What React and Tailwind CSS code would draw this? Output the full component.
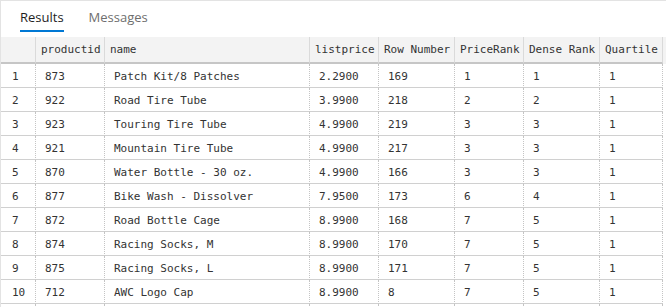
import React from 'react';

const columns = ['', 'productid', 'name', 'listprice', 'Row Number', 'PriceRank', 'Dense Rank', 'Quartile'];

const rows = [
  ['1', '873', 'Patch Kit/8 Patches', '2.2900', '169', '1', '1', '1'],
  ['2', '922', 'Road Tire Tube', '3.9900', '218', '2', '2', '1'],
  ['3', '923', 'Touring Tire Tube', '4.9900', '219', '3', '3', '1'],
  ['4', '921', 'Mountain Tire Tube', '4.9900', '217', '3', '3', '1'],
  ['5', '870', 'Water Bottle - 30 oz.', '4.9900', '166', '3', '3', '1'],
  ['6', '877', 'Bike Wash - Dissolver', '7.9500', '173', '6', '4', '1'],
  ['7', '872', 'Road Bottle Cage', '8.9900', '168', '7', '5', '1'],
  ['8', '874', 'Racing Socks, M', '8.9900', '170', '7', '5', '1'],
  ['9', '875', 'Racing Socks, L', '8.9900', '171', '7', '5', '1'],
  ['10', '712', 'AWC Logo Cap', '8.9900', '8', '7', '5', '1'],
];

const gridCols = 'grid grid-cols-[35px_69px_205px_69px_76px_69px_76px_63px]';

const App = () => {
  return (
    <div className="h-[307px] w-[666px] overflow-hidden bg-white border-t border-l border-[#e3e3e3]">
      {/* Tabs */}
      <div className="h-[36px] flex items-start gap-[25px] pl-[19px] pt-[7px] font-['Open_Sans',sans-serif] text-[13px]">
        <div className="leading-[18px] pb-[4px] border-b-2 border-[#0078d4] text-[#1e1e1e]">Results</div>
        <div className="leading-[18px] pb-[4px] text-[#6e6e6e]">Messages</div>
      </div>

      {/* Grid */}
      <div className="font-['DejaVu_Sans_Mono',monospace] text-[11px] text-[#333333]">
        <div className={`${gridCols} bg-[#f3f3f3]`}>
          {columns.map((c, i) => (
            <div
              key={i}
              className="h-[27px] flex items-center pl-[5px] pt-[2px] border-r border-b-2 border-r-[#dadada] border-b-[#c6c6c6] whitespace-nowrap overflow-hidden"
            >
              {c}
            </div>
          ))}
        </div>
        {rows.map((r, ri) => (
          <div key={ri} className={gridCols}>
            {r.map((v, ci) => (
              <div
                key={ci}
                className={`h-[24px] flex items-center pt-[4px] ${ci === 0 ? 'pl-[11px]' : 'pl-[9px]'} border-r border-dotted border-r-[#c4c4c4] border-b border-b-[#d0d0d0] [border-bottom-style:solid] whitespace-nowrap overflow-hidden`}
              >
                {v}
              </div>
            ))}
          </div>
        ))}
        <div className={gridCols}>
          {columns.map((c, i) => (
            <div key={i} className="h-[24px] border-r border-dotted border-r-[#c4c4c4]" />
          ))}
        </div>
      </div>
    </div>
  );
};

export default App;
